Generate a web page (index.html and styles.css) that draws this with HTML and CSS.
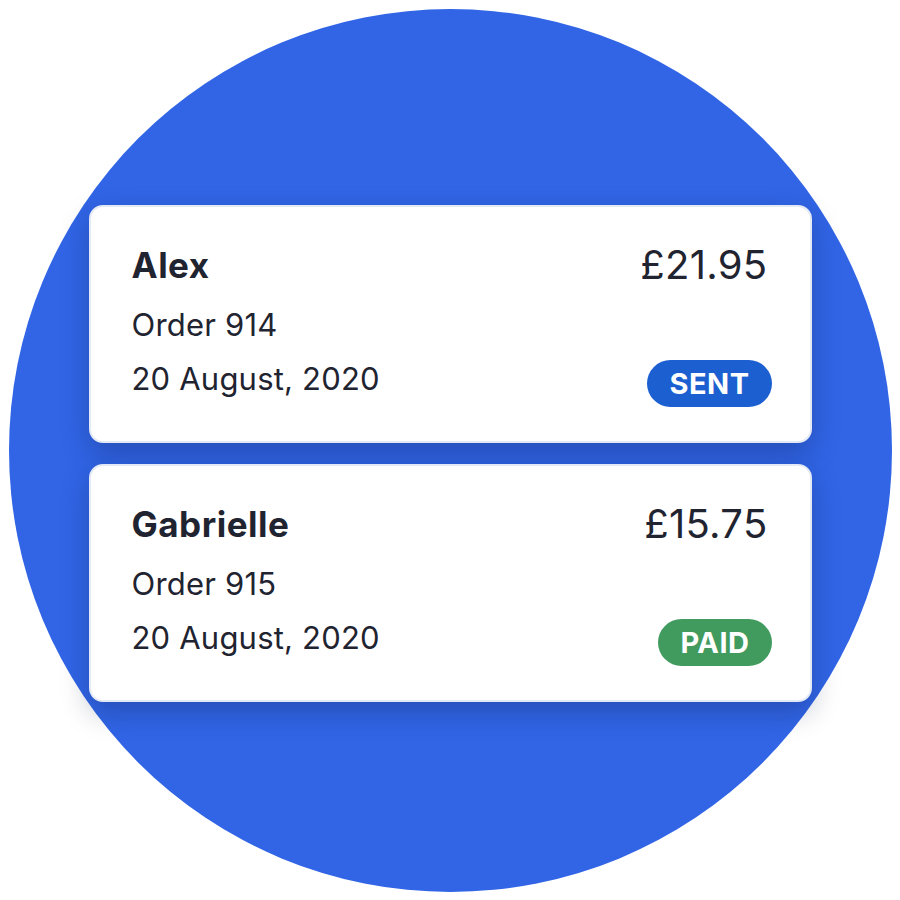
FILE: index.html
```html
<!DOCTYPE html>
<html lang="en">
<head>
    <meta charset="UTF-8">
    <meta name="viewport" content="width=device-width, initial-scale=1.0">
    <title>Orders</title>
    <link rel="stylesheet" href="styles.css">
</head>
<body>
    <div class="stage">
        <div class="circle">
            <!-- Order cards -->
            <div class="order-card">
                <div class="order-info">
                    <div class="customer">Alex</div>
                    <div class="line">Order 914</div>
                    <div class="line">20 August, 2020</div>
                </div>
                <div class="order-side">
                    <div class="price">£21.95</div>
                    <span class="badge sent">SENT</span>
                </div>
            </div>
            <div class="order-card">
                <div class="order-info">
                    <div class="customer">Gabrielle</div>
                    <div class="line">Order 915</div>
                    <div class="line">20 August, 2020</div>
                </div>
                <div class="order-side">
                    <div class="price">£15.75</div>
                    <span class="badge paid">PAID</span>
                </div>
            </div>
        </div>
    </div>
</body>
</html>
```

FILE: styles.css
```css
body {
    margin: 0;
    padding: 0;
    background: #ffffff;
    font-family: 'Inter', 'Noto Sans', sans-serif;
    color: #1f2430;
}
.stage {
    width: 900px;
    height: 900px;
    display: flex;
    justify-content: center;
    align-items: center;
}
.circle {
    width: 883px;
    height: 883px;
    border-radius: 50%;
    background: #3165e6;
    display: flex;
    flex-direction: column;
    justify-content: center;
    align-items: center;
    gap: 21px;
    padding-top: 6px;
    box-sizing: border-box;
}
.order-card {
    width: 723px;
    height: 238px;
    box-sizing: border-box;
    background: white;
    border: 2px solid #e4e9f6;
    border-radius: 14px;
    box-shadow: 0 10px 28px rgba(10, 20, 60, 0.28);
    padding: 36px 38px 34px 41px;
    display: flex;
    justify-content: space-between;
}
.order-info {
    display: flex;
    flex-direction: column;
}
.customer {
    font-size: 35px;
    font-weight: 700;
    line-height: 44px;
    letter-spacing: 0.5px;
    margin-bottom: 11px;
}
.line {
    font-size: 31px;
    line-height: 54px;
    letter-spacing: 0.2px;
}
.order-side {
    display: flex;
    flex-direction: column;
    align-items: flex-end;
    justify-content: space-between;
}
.price {
    font-size: 40px;
    line-height: 44px;
    letter-spacing: 0.3px;
    margin-right: 4px;
}
.badge {
    height: 47px;
    line-height: 47px;
    padding: 0 22px;
    border-radius: 24px;
    color: white;
    font-size: 29px;
    font-weight: 700;
    letter-spacing: 0.5px;
}
.sent {
    background: #1b5fd0;
}
.paid {
    background: #419b5f;
}
```
